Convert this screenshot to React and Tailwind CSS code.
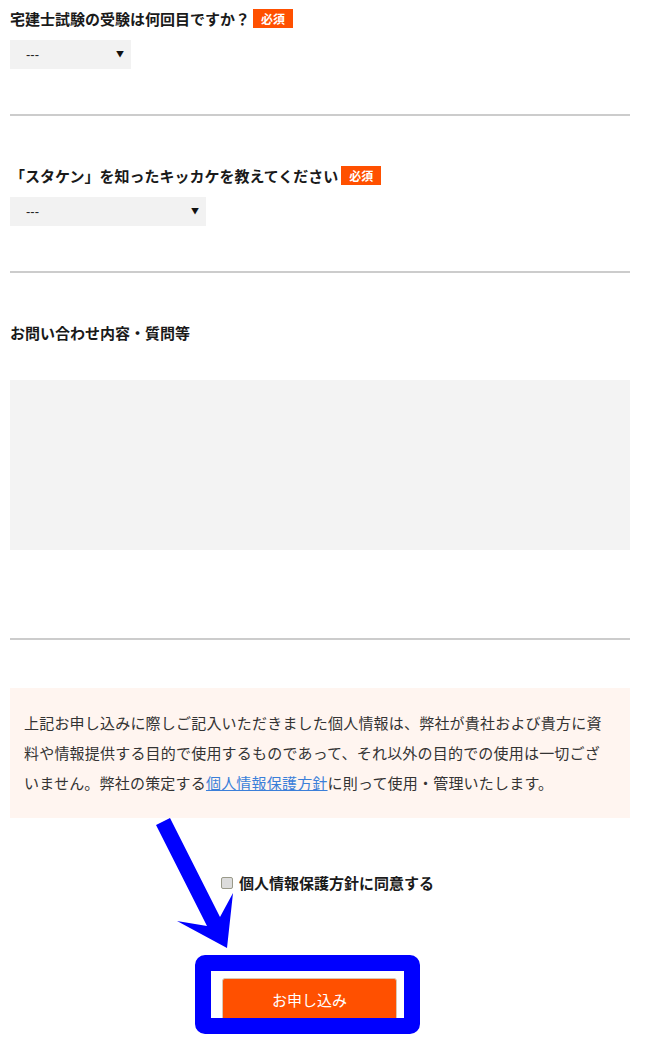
import React from 'react';

const font = { fontFamily: '"Noto Sans CJK JP", "Noto Sans", sans-serif' };

const Required = () => (
  <span className="ml-[3px] inline-flex h-[19px] w-[40px] items-center justify-center bg-[#ff5000] text-[12px] font-bold leading-none text-white">
    必須
  </span>
);

const Heading = ({ children, required }) => (
  <div className="flex h-[19px] items-center">
    <span className="text-[15px] font-bold leading-[19px] text-[#1a1a1a]">{children}</span>
    {required && <Required />}
  </div>
);

const FakeSelect = ({ width }) => (
  <div className={`relative mt-[12px] h-[29px] ${width}`}>
    <select className="h-full w-full appearance-none bg-[#f2f2f2] pl-[16px] text-[13px] text-[#222] outline-none [font-family:'Liberation_Sans',sans-serif]">
      <option>---</option>
    </select>
    <span className="pointer-events-none absolute right-[7px] top-[10px] text-[8px] leading-none text-[#111]">▼</span>
  </div>
);

const Divider = () => <div className="h-[2px] w-full bg-[#cccccc]" />;

const App = () => {
  return (
    <div className="relative min-h-screen w-[651px] bg-white" style={font}>
      <div className="ml-[10px] w-[620px] pt-[9px]">
        {/* Q1 */}
        <Heading required>宅建士試験の受験は何回目ですか？</Heading>
        <FakeSelect width="w-[121px]" />
        <div className="mt-[45px]">
          <Divider />
        </div>

        {/* Q2 */}
        <div className="mt-[50px]">
          <Heading required>「スタケン」を知ったキッカケを教えてください</Heading>
        </div>
        <FakeSelect width="w-[196px]" />
        <div className="mt-[45px]">
          <Divider />
        </div>

        {/* Q3 */}
        <div className="mt-[50px]">
          <Heading>お問い合わせ内容・質問等</Heading>
        </div>
        <textarea className="mt-[38px] block h-[170px] w-full resize-none bg-[#f3f3f3] outline-none" />
        <div className="mt-[88px]">
          <Divider />
        </div>

        {/* privacy notice */}
        <div className="mt-[48px] bg-[#fff5f0] py-[20px] pl-[14px] pr-[26px]">
          <p className="text-[15px] leading-[30px] tracking-[0.2px] text-[#333]">
            上記お申し込みに際しご記入いただきました個人情報は、弊社が貴社および貴方に資料や情報提供する目的で使用するものであって、それ以外の目的での使用は一切ございません。弊社の策定する
            <a href="#" className="text-[#3b7fd9] underline">個人情報保護方針</a>
            に則って使用・管理いたします。
          </p>
        </div>

        {/* agree */}
        <label className="ml-[211px] mt-[55px] flex h-[20px] items-center gap-[6px]">
          <span className="h-[12px] w-[12px] rounded-[2px] border border-[#9a9a8a] bg-[#dcdcdc]" />
          <span className="text-[15px] font-bold leading-[20px] text-[#1a1a1a]">個人情報保護方針に同意する</span>
        </label>

        {/* submit */}
        <div className="relative ml-[212px] mt-[85px] w-[175px]">
          <button className="h-[44px] w-[175px] rounded-[3px] border border-[#d9c9b5] bg-[#ff5000] text-[15px] text-white">
            お申し込み
          </button>
          {/* annotation box */}
          <div className="pointer-events-none absolute left-[-27px] top-[-23px] h-[79px] w-[225px] rounded-[10px] border-[16px] border-[#0000ff]" />
        </div>
      </div>

      {/* annotation arrow */}
      <svg
        className="pointer-events-none absolute left-[150px] top-[815px]"
        width="90"
        height="140"
        viewBox="0 0 90 140"
      >
        <polygon points="6,10 20,3 70,102 83,78 77,133 27,106 57,111" fill="#0000ff" />
      </svg>
    </div>
  );
};

export default App;
